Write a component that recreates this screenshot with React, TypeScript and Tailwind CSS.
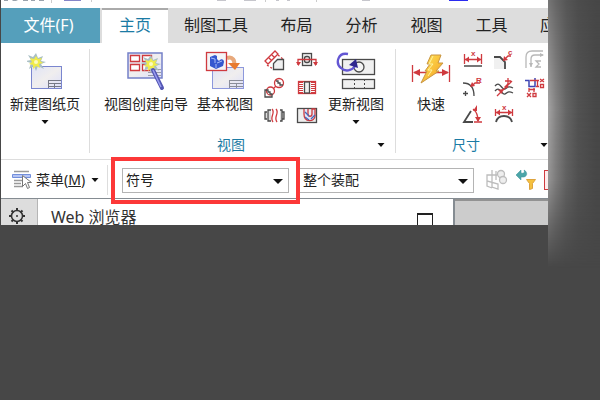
import type { ReactNode } from "react";

const RED = "#cf3a3f";
const INK = "#4a4a4a";

function Caret({ className = "" }: { className?: string }) {
  return (
    <svg className={"shrink-0 " + className} width="8" height="4" viewBox="0 0 8 4" aria-hidden="true">
      <path d="M0.5 0h7L4 4z" fill="#111" />
    </svg>
  );
}

function Sparkle({ x, y }: { x: number; y: number }) {
  return (
    <g transform={`translate(${x} ${y})`}>
      <path d="M0-9l2 5 5-2-2 5 5 1-5 2 3 5-6-3-2 5-2-5-5 3 2-6-6-2 6-1-3-5 5 2z" fill="#a9bfc4" />
      <path d="M0-6l2 3 4-1-2 3 3 2-4 1 1 4-4-2-3 3v-4l-4-1 3-2-2-4 4 1z" fill="#f0ec4a" />
      <circle r="2" fill="#fbfbc0" />
    </g>
  );
}

function SheetDefs() {
  return (
    <svg width="0" height="0" className="absolute" aria-hidden="true">
      <defs>
        <linearGradient id="sheet" x1="0" y1="0" x2="1" y2="1">
          <stop offset="0" stopColor="#dfe3f7" />
          <stop offset="0.5" stopColor="#f0eeee" />
          <stop offset="1" stopColor="#dcdffa" />
        </linearGradient>
        <linearGradient id="bolt" x1="0" y1="0" x2="1" y2="1">
          <stop offset="0" stopColor="#ffe95a" />
          <stop offset="1" stopColor="#f39a1e" />
        </linearGradient>
      </defs>
    </svg>
  );
}

function NewSheetIcon() {
  return (
    <svg width="36" height="38" viewBox="0 0 36 38" aria-hidden="true">
      <rect x="4.500" y="14.500" width="30" height="22" fill="url(#sheet)" stroke="#7a86cf" />
      <path d="M22 28.500h12M22 31.500h12M22 34.500h12M21.500 28v8M27.500 31v5" stroke="#777a86" fill="none" />
      <Sparkle x={9} y={10} />
    </svg>
  );
}

function WizardIcon() {
  return (
    <svg width="38" height="40" viewBox="0 0 38 40" aria-hidden="true">
      <rect x="1" y="2" width="34" height="25" fill="url(#sheet)" stroke="#7480c8" strokeWidth="1.500" />
      <path d="M3.500 4.500h9v6h-9zM15.500 4.500h9v6h-9zM3.500 13.500h9v6h-9zM15.500 13.500h9v6h-9z" fill="#fff" stroke={RED} strokeWidth="1.300" />
      <path d="M21 18.500h13M21 21.500h13M21 24.500h13" stroke="#9a9ca6" />
      <Sparkle x={24} y={13} />
      <path d="M26 19l9 18" stroke="#5457b4" strokeWidth="4" strokeLinecap="round" />
      <path d="M26 19l8 17" stroke="#9a9df0" strokeWidth="1.500" />
    </svg>
  );
}

function BaseViewIcon() {
  return (
    <svg width="40" height="40" viewBox="0 0 40 40" aria-hidden="true">
      <rect x="7.500" y="16.500" width="31" height="21" fill="url(#sheet)" stroke="#8d98dc" />
      <path d="M25 29.500h13M25 32.500h13M25 35.500h13M24.500 29v8M31.500 33v4" stroke="#8a8d99" />
      <path d="M22 7c6-2 8 3 7 7" fill="none" stroke="#e8a97c" strokeWidth="4" />
      <path d="M23 12h12l-5 7z" fill="#e87b30" />
      <rect x="1.500" y="1.500" width="20" height="18" fill="#f4f4f6" stroke={RED} strokeWidth="1.300" />
      <path d="M5 6l5-2 2 1v3l2 2c2-3 5-2 5 1l-1 4-7 3-6-3z" fill="#3658cf" />
      <path d="M6 7l4 1v4M12 12l5-2M11 13v4" stroke="#a9bdf7" fill="none" />
    </svg>
  );
}

function UpdateViewIcon() {
  return (
    <svg width="40" height="40" viewBox="0 0 40 40" aria-hidden="true">
      <rect x="6.500" y="8.500" width="32" height="15" fill="#f0f0f0" stroke={INK} strokeWidth="1.300" />
      <circle cx="23" cy="16" r="5" fill="#f4f4f4" stroke={INK} strokeWidth="1.300" />
      <rect x="6.500" y="28.500" width="32" height="9" fill="#f0f0f0" stroke={INK} strokeWidth="1.300" />
      <path d="M18.500 28v10M28.500 28v10" stroke={INK} strokeDasharray="2 2" />
      <path d="M12 3C2 1-1 12 5 17c4 4 11 3 14-2" fill="none" stroke="#6356d3" strokeWidth="2.300" />
      <path d="M13 14l7-6 2 9z" fill="#2f278f" />
    </svg>
  );
}

function RapidIcon() {
  return (
    <svg width="40" height="36" viewBox="0 0 40 36" aria-hidden="true">
      <path d="M1.500 12v17M38.500 12v17M3 19.500h34" stroke={RED} strokeWidth="1.300" />
      <path d="M2 19.500l7-3.500v7zM38 19.500l-7-3.500v7z" fill={RED} />
      <path d="M20 2h10l-3 8h5l-7 8h3L10 30l6-12h-2l5-7h-3z" fill="url(#bolt)" stroke="#c99540" />
      <path d="M22 3l-4 8h4l-5 6h4l-4 6" fill="none" stroke="#fff3a0" />
    </svg>
  );
}

function Small({ children }: { children: ReactNode }) {
  return (
    <svg width="22" height="22" viewBox="0 0 22 22" fill="none" stroke={INK} strokeWidth="1.300" aria-hidden="true">
      {children}
    </svg>
  );
}

const smallFont = "font-['Liberation_Sans'] font-bold text-[8px]";

const viewTools: { name: string; art: ReactNode }[] = [
  {
    name: "投影视图",
    art: (
      <>
        <path d="M1 11L11 1l3 3L4 14zM5 8l3 3M8 5l3 3" stroke={RED} />
        <path d="M14 5l6 5M3 15l6 4" stroke={RED} strokeDasharray="2 2" />
        <path d="M9.500 19.500v-6l4-4h6v10z" fill="#f0f0f0" />
      </>
    ),
  },
  {
    name: "剖视图",
    art: (
      <>
        <rect x="6.500" y="3.500" width="9" height="12" fill="#eee" />
        <rect x="8.500" y="6.500" width="5" height="6" rx="2" />
        <path d="M2 15v-5.500h5M20 15v-5.500h-5M7 9.500h8" stroke={RED} />
        <path d="M0 12h5l-2.500 4zM17 12h5l-2.500 4z" fill={RED} stroke="none" />
      </>
    ),
  },
  {
    name: "局部放大图",
    art: (
      <>
        <circle cx="15" cy="6" r="4.500" stroke={RED} />
        <circle cx="6.500" cy="14" r="4" stroke={RED} />
        <path d="M12 9l-3 3" stroke={RED} />
        <path d="M12 4h2v2h2v2h3M1 20v-7h3v2h2v2h2v3z" />
      </>
    ),
  },
  {
    name: "展开剖",
    art: (
      <>
        <rect x="2.500" y="4.500" width="17" height="12" stroke={RED} fill="#fff" />
        <path d="M4 5v12M6 5v12M16 5v12M18 5v12" stroke={RED} strokeDasharray="1 1" strokeWidth="2" />
        <rect x="8.500" y="5" width="5" height="11" fill="#eee" />
      </>
    ),
  },
  {
    name: "断开视图",
    art: (
      <>
        <path d="M7 6H4v11h3M3 8H1v7h2M16 6h2v11h-2M18 8h2v7h-2" fill="#ddd" />
        <path d="M8 5c4 4-3 8 1 13M12 5c4 4-3 8 1 13" stroke={RED} />
      </>
    ),
  },
  {
    name: "局部剖视图",
    art: (
      <>
        <rect x="1.500" y="4.500" width="19" height="14" fill="#eee" />
        <path d="M8 5v5c0 9 11 8 11 2V5h-3v5c0 3-4 3-4 0V5" fill="#dce5fa" stroke={RED} />
        <path d="M9 8l4 4M9 13l4 3M15 15l4-4" stroke="#4967b5" />
      </>
    ),
  },
];

const dimensionTools: { name: string; art: ReactNode }[] = [
  {
    name: "线性",
    art: (
      <>
        <path d="M2.500 4v10M19.500 4v10M3 9.500h16" stroke={RED} />
        <path d="M3 9.500l4-3v6zM19 9.500l-4-3v6z" fill={RED} stroke="none" />
        <path d="M2 16h18" strokeWidth="1.500" />
        <text x="9" y="6" className={smallFont} fill={RED} stroke="none">x</text>
      </>
    ),
  },
  {
    name: "倒斜角",
    art: (
      <>
        <path d="M1 7h7l4 4v8H1z" fill="#f0f0f0" stroke="none" />
        <path d="M1 7h6l5 5v7" strokeWidth="1.800" />
        <path d="M11 10l4-4h3" stroke={RED} />
        <path d="M10 11l1-5 4 4z" fill={RED} stroke="none" />
        <text x="15" y="5" className={smallFont} fill={RED} stroke="none">c</text>
      </>
    ),
  },
  {
    name: "厚度",
    art: (
      <>
        <path d="M2 18V7c0-4 2-6 6-6h11M7 17V9c0-3 1-4 4-4h8" stroke="#b8b8b8" />
        <path d="M5 13h4l-2 4zM16 3v4l4-2z" fill="#b8b8b8" stroke="none" />
        <path d="M17 11h-5l3 3-3 3h5" stroke="#b8b8b8" />
      </>
    ),
  },
  {
    name: "径向",
    art: (
      <>
        <path d="M1 6c8 0 11 6 11 13M3.500 14v5M1 16.500h5" />
        <path d="M10 9l3-3h5" stroke={RED} />
        <path d="M8 10l2-5 3 4z" fill={RED} stroke="none" />
        <text x="14" y="6" className={smallFont} fill={RED} stroke="none">R</text>
      </>
    ),
  },
  {
    name: "坡度",
    art: (
      <>
        <path d="M2 9c5-6 7 5 10 3s4-3 8-1M2 14c5-6 7 5 10 3s4-3 8-1" />
        <path d="M4 19l15-15M15 1v6M12 4h6" stroke={RED} />
        <path d="M11 10l4-4v5zM10 12l-5 1 4 4z" fill={RED} stroke="none" />
      </>
    ),
  },
  {
    name: "坐标",
    art: (
      <>
        <path d="M1 3.500h4v6h6V1" stroke="#3f46b4" strokeWidth="1.500" />
        <path d="M6 3.500h9M13.500 3v7M5 12.500h6M5 11v4M10 11v4M12 9.500h3" stroke={RED} />
        <path d="M3 16l4 4M7 16l-4 4M16 2l4 3M20 2l-4 3" stroke={RED} />
        <path d="M9 16.500h3v3H9zM16.500 7.500h3v3h-3z" stroke={RED} />
      </>
    ),
  },
  {
    name: "角度",
    art: (
      <>
        <path d="M9 7l-7 11h9" strokeWidth="1.800" />
        <path d="M11 5c4 3 5 6 5 12M12 18h8" stroke={RED} />
        <path d="M11 7l4-6v6zM13 13h6l-3 5z" fill={RED} stroke="none" />
      </>
    ),
  },
  {
    name: "弧长",
    art: (
      <>
        <path d="M2.500 5v7M19.500 5v7M3 8.500h16" stroke={RED} />
        <path d="M3 8.500l4-3v6zM19 8.500l-4-3v6z" fill={RED} stroke="none" />
        <path d="M3 18c2-8 14-8 16 0" strokeWidth="1.800" />
        <text x="9" y="6" className={smallFont} fill={RED} stroke="none">x</text>
      </>
    ),
  },
];

function BigButton({ label, icon, caret = false, className }: { label: string; icon: ReactNode; caret?: boolean; className: string }) {
  return (
    <button type="button" className={"flex shrink-0 flex-col items-center whitespace-nowrap " + className}>
      <span className="flex h-[42px] items-center">{icon}</span>
      <span className="text-sm leading-6">{label}</span>
      {caret && <Caret className="mt-1" />}
    </button>
  );
}

function ToolGrid({ tools, className }: { tools: { name: string; art: ReactNode }[]; className: string }) {
  return (
    <div className={"grid shrink-0 content-start gap-y-[5px] " + className}>
      {tools.map((t) => (
        <button key={t.name} type="button" aria-label={t.name} className="h-[22px] w-[22px]">
          <Small>{t.art}</Small>
        </button>
      ))}
    </div>
  );
}

function Group({ title, className, titleClass, children }: { title?: string; className: string; titleClass?: string; children: ReactNode }) {
  return (
    <section className={"flex flex-col " + className}>
      <div className="flex h-[90px] pt-px">{children}</div>
      {title && (
        <div className={"flex h-5 items-end text-sm leading-4 text-[#1b7ba4] " + titleClass}>
          <span>{title}</span>
          <Caret className="mb-1.5 ml-auto" />
        </div>
      )}
    </section>
  );
}

function Filter({ label, options, className }: { label: string; options: string[]; className: string }) {
  return (
    <label className={"relative block h-[25px] shrink-0 " + className}>
      <select aria-label={label} className="block h-full w-full appearance-none border border-[#b4b4b4] bg-white px-[3px] text-sm leading-5 text-[#222]">
        {options.map((o) => (
          <option key={o}>{o}</option>
        ))}
      </select>
      <svg className="pointer-events-none absolute right-1.5 top-[11px]" width="10" height="5" viewBox="0 0 10 5" aria-hidden="true">
        <path d="M0 0h10L5 5z" fill="#111" />
      </svg>
    </label>
  );
}

function QuickAccess() {
  return (
    <div className="h-2 overflow-hidden bg-white">
      <svg width="548" height="8" viewBox="0 0 548 8" aria-hidden="true">
        <path d="M3 0h4v1H3zM11 0h4l2 1h-5zM22 0h5v1h-5zM30 0h4v1h-4zM38 0h5v1h-5z" fill="#9aa3ad" />
        <path d="M63 0h17v1H63z" fill="#8585c8" />
        <path d="M50 0h1v3h-1zM90 0h1v2h-1zM264 0h1v2h-1zM315 0h1v2h-1z" fill="#ccc" />
        <path d="M216 0h9v1h-9zM243 0h12v1h-12zM275 0h3v1h-3zM286 0h3v1h-3zM361 0h8v1h-8z" fill="#c6c6cc" />
        <path d="M448 0h19v1h-19z" fill="#2a2af0" />
      </svg>
    </div>
  );
}

function TabBar() {
  const tabs = ["制图工具", "布局", "分析", "视图", "工具", "应用模块"];
  return (
    <nav className="flex h-[35px] overflow-hidden bg-[#ddd] text-base whitespace-nowrap">
      <button type="button" className="w-[99px] shrink-0 bg-[#559fbb] pr-1 pb-0.5 text-white">文件(F)</button>
      <button type="button" className="ml-0.5 w-[66px] shrink-0 border-t-2 border-[#aaa] bg-white pb-1 text-[#1b7ba4]">主页</button>
      {tabs.map((t) => (
        <button key={t} type="button" className="min-w-[65px] shrink-0 px-4 pb-0.5 text-[#222]">{t}</button>
      ))}
    </nav>
  );
}

function Ribbon() {
  return (
    <div className="flex h-[117px] overflow-hidden border-b border-[#ddd] py-1.5">
      <Group className="w-[89px] shrink-0 border-r border-[#ddd]">
        <BigButton className="w-full" label="新建图纸页" icon={<NewSheetIcon />} caret />
      </Group>
      <Group className="w-[306px] shrink-0 border-r border-[#ddd]" title="视图" titleClass="pl-[127px] pr-2.5">
        <BigButton className="w-28" label="视图创建向导" icon={<WizardIcon />} />
        <BigButton className="w-[46px]" label="基本视图" icon={<BaseViewIcon />} />
        <ToolGrid className="ml-4 grid-cols-2 gap-x-2.5" tools={viewTools} />
        <BigButton className="ml-2 w-[60px]" label="更新视图" icon={<UpdateViewIcon />} caret />
      </Group>
      <Group className="min-w-[152px] flex-1" title="尺寸" titleClass="pl-14">
        <BigButton className="w-[70px]" label="快速" icon={<RapidIcon />} />
        <ToolGrid className="-ml-1 grid-cols-3 gap-x-[9px]" tools={dimensionTools} />
      </Group>
    </div>
  );
}

function MenuIcon() {
  return (
    <svg width="22" height="20" viewBox="0 0 22 20" aria-hidden="true">
      <path d="M3 1.500h15M3 10.500h8M3 13.500h7M3 16.500h9" stroke="#9a9a9a" strokeWidth="1.500" />
      <path d="M1.500 4.500h18v3h-18z" fill="#b6c5f3" stroke="#728fdc" />
      <path d="M11.500 5.500v11l3-3 2 5 2-1-2-5h4z" fill="#fff" stroke="#777" />
    </svg>
  );
}

function SelectionBar() {
  return (
    <div className="flex h-[39px] items-center overflow-x-clip border-b border-[#858c92] pt-0.5">
      <button type="button" className="ml-2.5 flex shrink-0 items-center text-sm text-[#222]">
        <MenuIcon />
        <span className="ml-[3px]">菜单(<u>M</u>)</span>
        <Caret className="ml-1.5" />
      </button>
      <div className="ml-2 h-[30px] w-px shrink-0 bg-[#ddd]" />
      <div className="relative ml-3.5">
        <Filter label="类型过滤器" className="w-[167px]" options={["符号", "尺寸", "视图"]} />
        <div className="pointer-events-none absolute -inset-x-[11px] -inset-y-[11px] z-10 border-4 border-[#fc3838]" />
      </div>
      <Filter label="选择范围" className="ml-2.5 w-[175px]" options={["整个装配", "仅在工作部件内"]} />
      <button type="button" aria-label="装配选择" className="ml-3 shrink-0">
        <svg width="22" height="22" viewBox="0 0 22 22" fill="none" stroke="#bdbdbd" strokeWidth="1.300" aria-hidden="true">
          <path d="M1 6h5v12l6 2v-5L1 12zM1 12v5l5 2M6 1v11M2 6h9M10 2v9" />
          <circle cx="15" cy="5" r="3.500" fill="#eee" />
          <circle cx="17" cy="11" r="3.500" fill="#eee" />
        </svg>
      </button>
      <button type="button" aria-label="重置过滤器" className="ml-2 shrink-0">
        <svg width="22" height="22" viewBox="0 0 22 22" aria-hidden="true">
          <path d="M0 6l5-5v3c3 1 4-1 3-3 4 2 4 8-3 7v3z" fill="#4ba5a8" stroke="#368f95" strokeWidth="0.500" />
          <path d="M10.500 10.500h9l-3 4v5l-3 1v-6z" fill="#f5c13e" stroke="#dda33e" />
        </svg>
      </button>
      <button type="button" aria-label="选择框" className="ml-1.5 h-5 w-5 shrink-0 border border-[#cf3a3f] bg-[#fdecec]" />
    </div>
  );
}

function DockArea() {
  return (
    <div className="flex h-[26px] overflow-hidden bg-[#ccc]">
      <button type="button" aria-label="资源设置" className="flex w-[37px] shrink-0 justify-center border-r border-[#b5b5b5] bg-[#ddd] pr-1 pt-2">
        <svg width="18" height="18" viewBox="0 0 18 18" fill="none" stroke="#333" aria-hidden="true">
          <circle cx="9" cy="9" r="5.500" strokeWidth="1.500" />
          <path d="M9 1v3M9 14v3M1 9h3M14 9h3M3.500 3.500l2 2M12.500 12.500l2 2M3.500 14.500l2-2M12.500 5.500l2-2" strokeWidth="2" />
          <circle cx="9" cy="9" r="1" fill="#333" stroke="none" />
        </svg>
      </button>
      <div className="flex w-[417px] shrink-0 items-start justify-between border-r-2 border-[#858c92] bg-white pl-[13px] pr-5 pt-2">
        <h2 className="text-base leading-5 text-[#333]">Web 浏览器</h2>
        <button type="button" aria-label="最大化" className="mt-1.5 h-4 w-4 border border-t-2 border-[#222]" />
      </div>
      <div className="flex-1 border-t-2 border-[#929292]" />
    </div>
  );
}

export default function App() {
  return (
    <div className="flex min-h-screen items-stretch overflow-hidden bg-[#474747] pl-px font-['Noto_Sans','Noto_Sans_CJK_SC',sans-serif] text-[#222]">
      <SheetDefs />
      <main className="min-w-0 flex-1">
        <div className="bg-white">
          <QuickAccess />
          <TabBar />
          <Ribbon />
          <SelectionBar />
          <DockArea />
        </div>
      </main>
      <aside className="w-[52px] shrink-0">
        <div className="h-[270px] bg-[linear-gradient(to_right,#a5a4a4_0px,#858484_8px,#666_18px,#525252_30px,#474747_48px)] [mask-image:linear-gradient(to_bottom,rgba(0,0,0,0.5)_0px,rgba(0,0,0,0.75)_50px,black_110px,rgba(0,0,0,0.85)_180px,rgba(0,0,0,0.4)_225px,transparent_268px)]" />
      </aside>
    </div>
  );
}
